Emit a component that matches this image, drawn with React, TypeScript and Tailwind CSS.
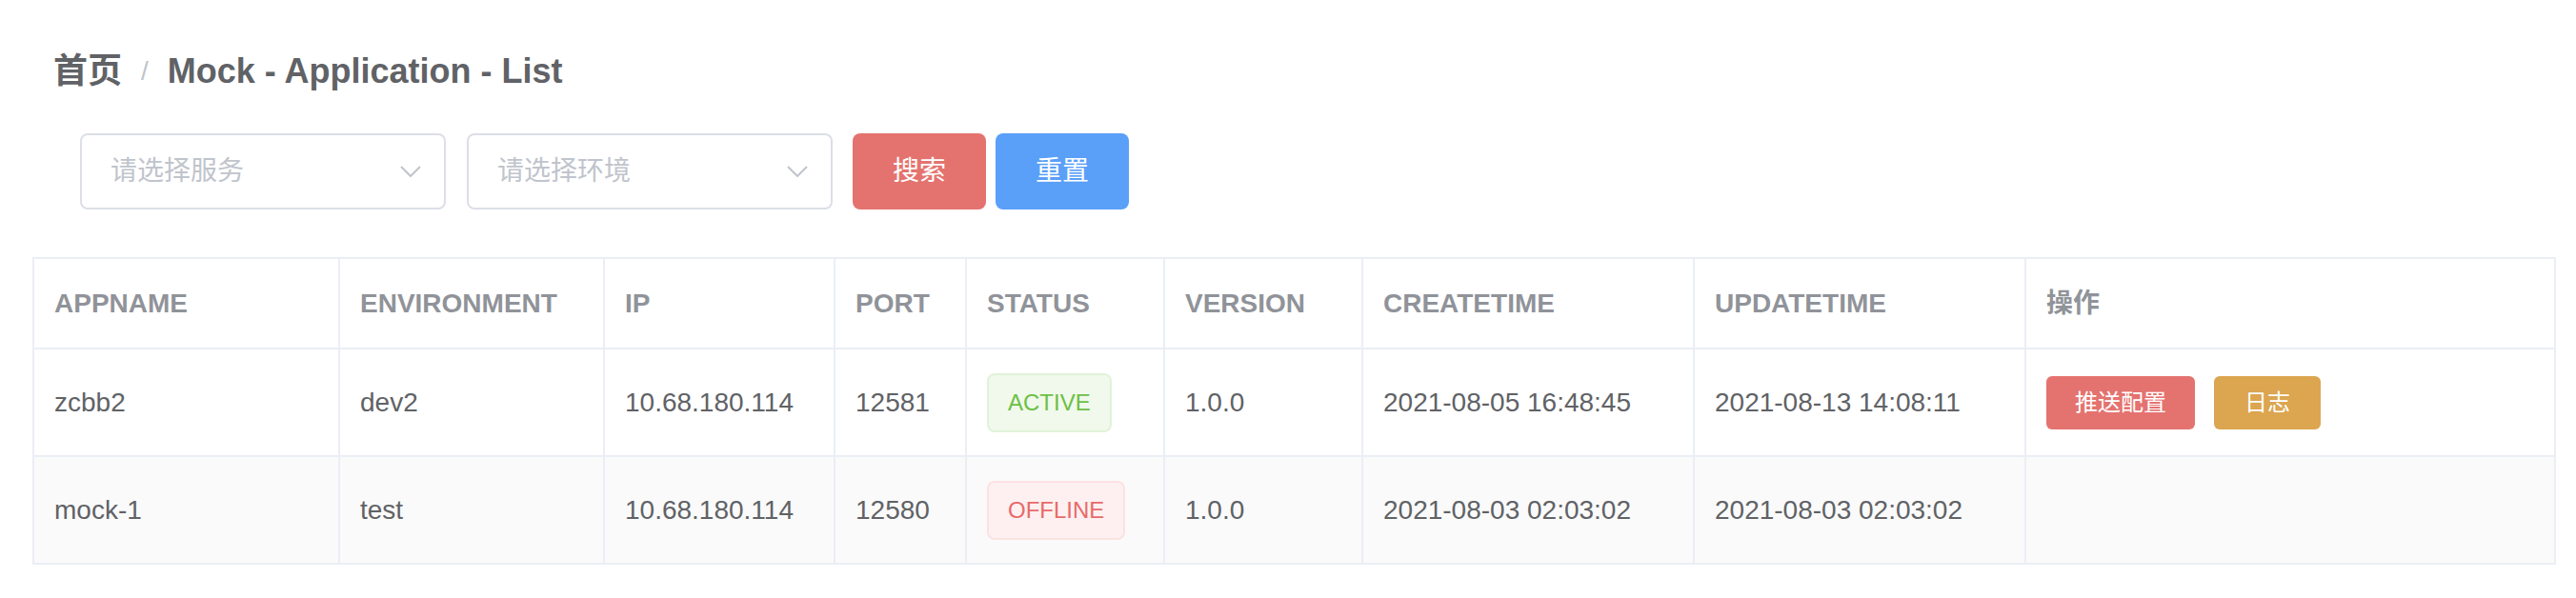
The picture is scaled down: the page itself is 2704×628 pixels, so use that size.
import React from 'react';

type Row = {
  appName: string;
  environment: string;
  ip: string;
  port: string;
  status: 'ACTIVE' | 'OFFLINE';
  version: string;
  createTime: string;
  updateTime: string;
};

const rows: Row[] = [
  {
    appName: 'zcbb2',
    environment: 'dev2',
    ip: '10.68.180.114',
    port: '12581',
    status: 'ACTIVE',
    version: '1.0.0',
    createTime: '2021-08-05 16:48:45',
    updateTime: '2021-08-13 14:08:11',
  },
  {
    appName: 'mock-1',
    environment: 'test',
    ip: '10.68.180.114',
    port: '12580',
    status: 'OFFLINE',
    version: '1.0.0',
    createTime: '2021-08-03 02:03:02',
    updateTime: '2021-08-03 02:03:02',
  },
];

const columns = [
  { label: 'APPNAME', width: 'w-[321px]' },
  { label: 'ENVIRONMENT', width: 'w-[278px]' },
  { label: 'IP', width: 'w-[242px]' },
  { label: 'PORT', width: 'w-[138px]' },
  { label: 'STATUS', width: 'w-[208px]' },
  { label: 'VERSION', width: 'w-[208px]' },
  { label: 'CREATETIME', width: 'w-[348px]' },
  { label: 'UPDATETIME', width: 'w-[348px]' },
  { label: '操作', width: 'w-[556px]' },
];

function SelectBox({ placeholder }: { placeholder: string }) {
  return (
    <div className="flex h-[80px] w-[384px] items-center justify-between rounded-[8px] border-2 border-[#dcdfe6] bg-white pl-[30px] pr-[24px]">
      <span className="text-[28px] text-[#c0c4cc]">{placeholder}</span>
      <svg width="22" height="12" viewBox="0 0 22 12" fill="none" aria-hidden="true">
        <path d="M1 1l10 10L21 1" stroke="#c0c4cc" strokeWidth={2} />
      </svg>
    </div>
  );
}

function StatusTag({ status }: { status: Row['status'] }) {
  const active = status === 'ACTIVE';
  return (
    <span
      className={`inline-flex h-[62px] items-center rounded-[8px] border-2 px-[20px] text-[24px] ${
        active
          ? 'border-[#e1f3d8] bg-[#f0f9eb] text-[#6dbf45]'
          : 'border-[#fde2e2] bg-[#fef0f0] text-[#e86a6a]'
      }`}
    >
      {status}
    </span>
  );
}

export default function App() {
  const td = 'border-2 border-[#ebeef5] pl-[21px] align-middle';

  return (
    <div className="h-[628px] w-[2704px] bg-white font-['Liberation_Sans','Noto_Sans_CJK_SC',sans-serif]">
      {/* Breadcrumb */}
      <div className="flex items-center pl-[56px] pt-[55px] text-[36px] font-bold leading-[40px] text-[#606266]">
        <span>首页</span>
        <span className="mx-[20px] text-[28px] font-normal text-[#c0c4cc]">/</span>
        <span>Mock - Application - List</span>
      </div>

      {/* Filters */}
      <div className="mt-[45px] flex items-center pl-[84px]">
        <SelectBox placeholder="请选择服务" />
        <div className="ml-[22px]">
          <SelectBox placeholder="请选择环境" />
        </div>
        <button className="ml-[21px] h-[80px] w-[140px] rounded-[8px] bg-[#e4736f] text-[28px] text-white">
          搜索
        </button>
        <button className="ml-[10px] h-[80px] w-[140px] rounded-[8px] bg-[#5a9ff8] text-[28px] text-white">
          重置
        </button>
      </div>

      {/* Table */}
      <table className="ml-[34px] mt-[50px] w-[2647px] table-fixed border-collapse border-2 border-[#ebeef5] text-left text-[28px]">
        <colgroup>
          {columns.map(col => (
            <col key={col.label} className={col.width} />
          ))}
        </colgroup>
        <thead>
          <tr className="h-[95px]">
            {columns.map(col => (
              <th key={col.label} className={`${td} font-bold text-[#909399]`}>
                {col.label}
              </th>
            ))}
          </tr>
        </thead>
        <tbody className="text-[#606266]">
          {rows.map((row, i) => (
            <tr key={row.appName} className={`h-[113px] ${i % 2 === 1 ? 'bg-[#fafafa]' : 'bg-white'}`}>
              <td className={td}>{row.appName}</td>
              <td className={td}>{row.environment}</td>
              <td className={td}>{row.ip}</td>
              <td className={td}>{row.port}</td>
              <td className={td}>
                <StatusTag status={row.status} />
              </td>
              <td className={td}>{row.version}</td>
              <td className={td}>{row.createTime}</td>
              <td className={td}>{row.updateTime}</td>
              <td className={td}>
                {row.status === 'ACTIVE' && (
                  <div className="flex gap-[20px]">
                    <button className="h-[56px] rounded-[6px] bg-[#e4736f] px-[30px] text-[24px] text-white">
                      推送配置
                    </button>
                    <button className="h-[56px] rounded-[6px] bg-[#dca550] px-[32px] text-[24px] text-white">
                      日志
                    </button>
                  </div>
                )}
              </td>
            </tr>
          ))}
        </tbody>
      </table>
    </div>
  );
}
